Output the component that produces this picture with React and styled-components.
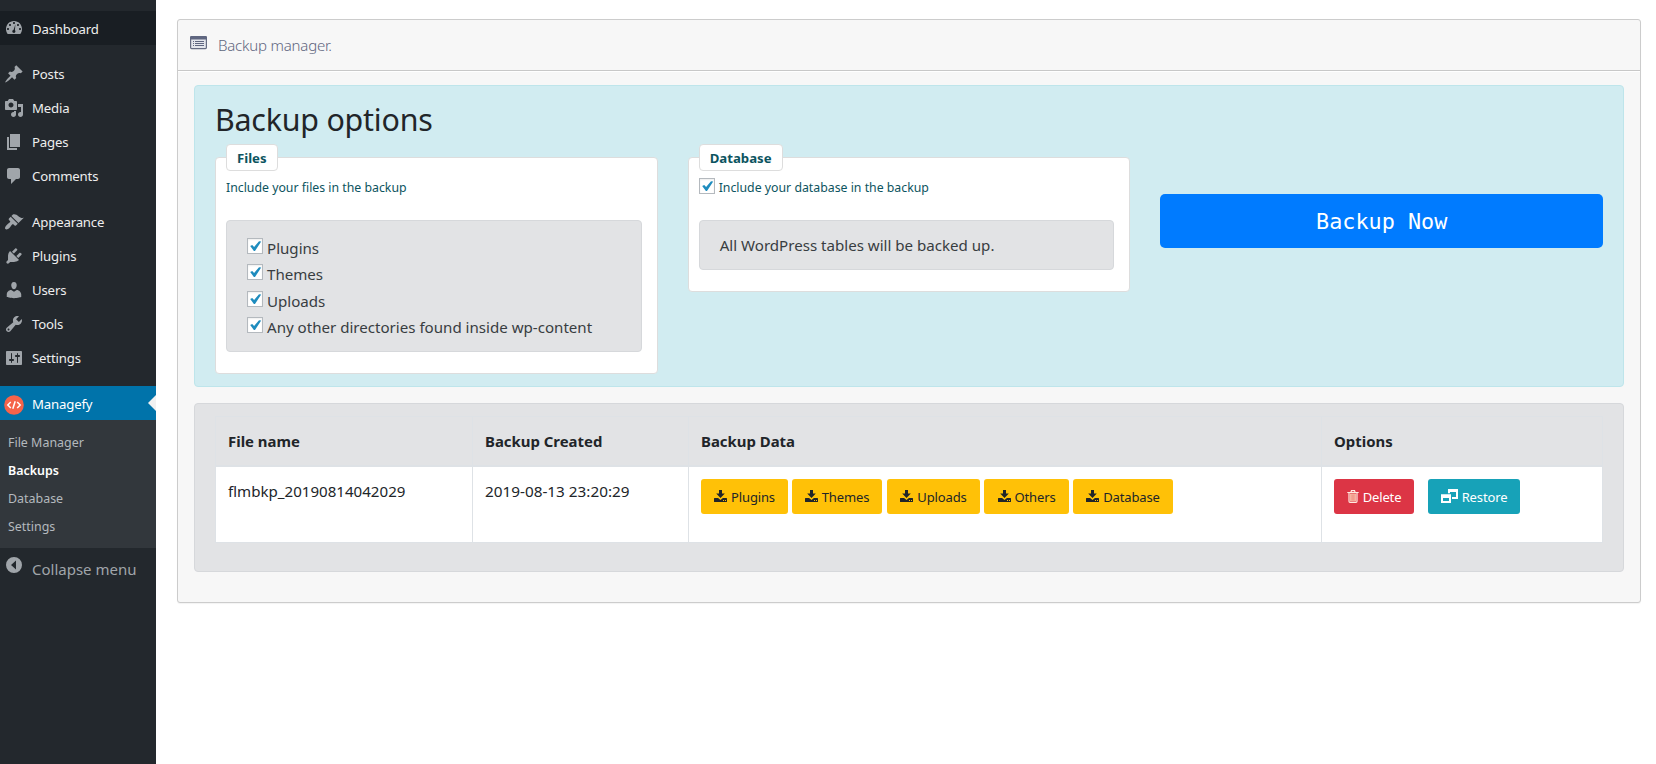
import React from 'react';
import styled, { createGlobalStyle, css } from 'styled-components';

const Global = createGlobalStyle`
  *, *::before, *::after { box-sizing: border-box; }
  html, body, #root { height: 100%; }
  body { margin: 0; background: #fff; color: #212529; font-family: "Noto Sans", "Open Sans", sans-serif; font-size: 15.1px; line-height: 24px; overflow: hidden; }
`;

const Page = styled.div`display: flex; height: 764px;`;

/* Sidebar */
const Sidebar = styled.nav`width: 156px; flex: none; background: #23282d; padding-top: 11px;`;
const MenuGroup = styled.div`margin-bottom: ${p => p.$gap ?? 12}px;`;
const MenuItem = styled.div`
  position: relative; height: 34px; display: flex; align-items: center; gap: 8px; padding-left: 4px;
  font-size: 13.2px; letter-spacing: -0.17px; color: ${p => (p.$current ? '#fff' : '#eee')}; line-height: 18px;
  background: ${p => (p.$current ? '#0073aa' : p.$hover ? '#191e23' : 'transparent')};
  svg { color: #a0a5aa; flex: none; }
`;
const MenuLabel = styled.span`padding-top: ${p => (p.$low ? 2 : 0)}px;`;
const Arrow = styled.span`
  position: absolute; right: 0; top: 9px; border: 8px solid transparent; border-right-color: #f1f1f1; border-left: 0;
`;
const SubMenu = styled.div`background: #32373c; height: 128px; padding: 9px 0 7px 8px;`;
const SubItem = styled.div`
  height: 28px; line-height: 28px; font-size: 12.45px; color: ${p => (p.$on ? '#fff' : '#b4b9be')};
  font-weight: ${p => (p.$on ? 600 : 400)};
`;
const Collapse = styled.div`
  display: flex; gap: 8px; padding: 7px 0 0 4px; color: #a0a5aa;
  span { padding-top: 2px; font-size: 15px; line-height: 24px; }
`;

/* Main panel */
const Main = styled.main`flex: 1; padding: 19px 15px 0 21px;`;
const Panel = styled.section`
  height: 584px; border: 1px solid #ccc; border-radius: 3px; background: #f7f7f7; box-shadow: 0 1px 1px rgba(0,0,0,.05);
`;
const PanelHead = styled.header`
  height: 51px; border-bottom: 1px solid #c8c8c8; box-shadow: 0 1px 0 #fff; display: flex; padding: 15px 0 0 12px; gap: 11px; color: #5f6680;
  svg { margin-top: 1px; }
  span { font-weight: 300; font-size: 15px; letter-spacing: -0.2px; line-height: 20px; }
`;
const PanelBody = styled.div`padding: 14px 16px; display: flex; flex-direction: column; gap: 16px;`;
const Box = styled.div`
  border: 1px solid ${p => (p.$info ? '#bee5eb' : '#d6d8db')}; background: ${p => (p.$info ? '#d1ecf1' : '#e2e3e5')};
  color: ${p => (p.$info ? '#0c5460' : '#383d41')}; border-radius: 4px; padding: 12px 20px;
`;
const OptionsBox = styled(Box)`height: 302px;`;
const TableBox = styled(Box)`height: 169px;`;
const ChecksBox = styled(Box)`height: 132px;`;
const Heading = styled.h2`
  margin: 0 0 21px; padding-top: 3px; height: 38px; font-size: 30.4px; letter-spacing: -0.22px; line-height: 38px;
  font-weight: 400; color: #212529;
`;
const Columns = styled.div`display: grid; grid-template-columns: repeat(3, 1fr); gap: 30px; align-items: start;`;
const FieldSet = styled.div`
  background: #fff; border: 1px solid #ddd; border-radius: 4px; padding: 0 15px 21px 10px; display: flex; flex-direction: column;
`;
const Legend = styled.div`
  align-self: flex-start; margin-top: -14px; height: 27px; padding: 1px 10px 0; border: 1px solid #ddd; border-radius: 4px;
  background: #fff; font-weight: 700; font-size: 13.2px; line-height: 25px;
`;
const Hint = styled.div`height: 16px; margin: 7px 0 26px; display: flex; gap: 4px; font-size: 12.3px; line-height: 20px;`;
const CheckRow = styled.div`
  height: 26.4px; display: flex; align-items: flex-start; gap: 4px; padding-top: 5px;
  span { line-height: 20px; }
`;
const CheckBoxFrame = styled.span`
  width: 16px; height: 16px; flex: none; border: 1px solid #b4b9be; background: #fff; box-shadow: inset 0 1px 2px rgba(0,0,0,.07);
  svg { display: block; }
`;
const BackupButton = styled.button`
  margin-top: 37px; height: 54px; width: 100%; border: 0; border-radius: 5px; background: #007bff; color: #fff;
  font: 21.8px/54px "DejaVu Sans Mono", monospace; padding: 1px 0 0;
`;
const Table = styled.table`
  width: 1388px; border-collapse: collapse; table-layout: fixed; color: #212529;
  th, td { border: 1px solid #dee2e6; padding: 12px; text-align: left; vertical-align: top; }
  th { border-bottom-width: 2px; height: 49px; padding-bottom: 11px; font-weight: 700; font-size: 14.92px; }
  td { background: #fff; height: 77px; }
`;
const DateCell = styled.td`font-size: 15.3px;`;
const tones = {
  warning: css`background: #ffc107; color: #212529;`,
  danger: css`background: #dc3545; color: #fff;`,
  info: css`background: #17a2b8; color: #fff;`,
};
const Actions = styled.div`display: flex; gap: ${p => p.$gap}px;`;
const Action = styled.button`
  height: 35px; width: ${p => p.$w}px; margin-right: ${p => p.$after ?? 0}px; border: 0; border-radius: 3px; padding: 0;
  display: flex; align-items: center; justify-content: center; gap: 4px;
  font: 13px/20px "Noto Sans", sans-serif; letter-spacing: -0.14px; ${p => tones[p.$tone]}
  span { padding-top: 2px; }
`;

const icons = {
  dashboard: 'M3.76 16h12.48c1.1-1.37 1.76-3.11 1.76-5 0-4.42-3.58-8-8-8s-8 3.58-8 8c0 1.89.66 3.63 1.76 5zM10 4c.55 0 1 .45 1 1s-.45 1-1 1-1-.45-1-1 .45-1 1-1zM6 6c.55 0 1 .45 1 1s-.45 1-1 1-1-.45-1-1 .45-1 1-1zm8 0c.55 0 1 .45 1 1s-.45 1-1 1-1-.45-1-1 .45-1 1-1zm-2.6.4l-.5 5.9c.5.4.7 1 .4 1.6-.3.8-1.2 1.2-2 .9-.8-.3-1.2-1.2-.9-2 .2-.5.6-.8 1.1-.9zM4 10c.55 0 1 .45 1 1s-.45 1-1 1-1-.45-1-1 .45-1 1-1zm12 0c.55 0 1 .45 1 1s-.45 1-1 1-1-.45-1-1 .45-1 1-1z',
  post: 'M10.44 3.02l1.82-1.82 6.36 6.35-1.83 1.82c-1.05-.68-2.48-.57-3.41.36l-.75.75c-.92.93-1.04 2.35-.35 3.41l-1.83 1.82-2.41-2.41-2.8 2.79c-.42.42-3.38 2.71-3.8 2.29s1.86-3.39 2.28-3.81l2.79-2.79L4.1 9.36l1.83-1.82c1.05.69 2.48.57 3.4-.36l.75-.75c.93-.92 1.05-2.35.36-3.41z',
  media: 'M13 11V4c0-.55-.45-1-1-1h-1.67L9 1H5L3.67 3H2c-.55 0-1 .45-1 1v7c0 .55.45 1 1 1h10c.55 0 1-.45 1-1zM7 4.5c1.38 0 2.5 1.12 2.5 2.5S8.38 9.5 7 9.5 4.5 8.38 4.5 7 5.62 4.5 7 4.5zM14 6h5v10.5c0 1.38-1.12 2.5-2.5 2.5S14 17.88 14 16.5s1.12-2.5 2.5-2.5c.17 0 .34.02.5.05V9h-3V6zm-4 8.05V13h2v3.5c0 1.38-1.12 2.5-2.5 2.5S7 17.88 7 16.5 8.12 14 9.5 14c.17 0 .34.02.5.05z',
  page: 'M6 15V2h10v13H6zm-1 1h8v2H3V5h2v11z',
  comment: 'M5 2h9c1.1 0 2 .9 2 2v7c0 1.1-.9 2-2 2h-2l-5 5v-5H5c-1.1 0-2-.9-2-2V4c0-1.1.9-2 2-2z',
  appearance: 'M14.48 11.06L7.41 3.99l1.5-1.5c.5-.56 2.3-.47 3.51.32 1.21.8 1.43 1.28 2.91 2.1 1.18.64 2.45 1.26 4.45.85zm-.71.71L6.7 4.7 4.93 6.47c-.39.39-.39 1.02 0 1.41l1.06 1.06c.39.39.39 1.03 0 1.42-.6.6-1.43 1.11-2.21 1.69-.35.26-.7.53-1.01.84C1.43 14.23.4 16.08 1.4 17.07c.99 1 2.84-.03 4.18-1.36.31-.31.58-.66.85-1.02.57-.78 1.08-1.61 1.69-2.21.39-.39 1.02-.39 1.41 0l1.06 1.06c.39.39 1.02.39 1.41 0z',
  plugins: 'M13.11 4.36L9.87 7.6 8 5.73l3.24-3.24c.35-.34 1.05-.2 1.56.32.52.51.66 1.21.31 1.55zm-8 1.77l.91-1.12 9.01 9.01-1.19.84c-.71.71-2.63 1.16-3.82 1.16H6.14L4.9 17.26c-.59.59-1.54.59-2.12 0-.59-.58-.59-1.53 0-2.12l1.24-1.24v-3.88c0-1.13.4-3.19 1.09-3.89zm7.26 3.97l3.24-3.24c.34-.35 1.04-.21 1.55.31.52.51.66 1.21.31 1.55l-3.24 3.25z',
  users: 'M10 9.25c-2.27 0-2.73-3.44-2.73-3.44C7 4.02 7.82 2 9.97 2c2.16 0 2.98 2.02 2.71 3.81 0 0-.41 3.44-2.68 3.44zm0 2.57L12.72 10c2.39 0 4.52 2.33 4.52 4.53v2.49s-3.65 1.13-7.24 1.13c-3.65 0-7.24-1.13-7.24-1.13v-2.49c0-2.25 1.94-4.48 4.47-4.48z',
  tools: 'M16.68 9.77c-1.34 1.34-3.3 1.67-4.95.99l-5.41 6.52c-.99.99-2.59.99-3.58 0s-.99-2.59 0-3.57l6.52-5.42c-.68-1.65-.35-3.61.99-4.95 1.28-1.28 3.12-1.62 4.72-1.06l-2.89 2.89 2.82 2.82 2.86-2.87c.53 1.58.18 3.39-1.08 4.65zM3.81 16.21c.4.39 1.04.39 1.43 0 .4-.4.4-1.04 0-1.43-.39-.4-1.03-.4-1.43 0-.39.39-.39 1.03 0 1.43z',
  settings: 'M18 16V4c0-.55-.45-1-1-1H3c-.55 0-1 .45-1 1v12c0 .55.45 1 1 1h14c.55 0 1-.45 1-1zM8 11h1c.55 0 1 .45 1 1s-.45 1-1 1H8v1.5c0 .28-.22.5-.5.5s-.5-.22-.5-.5V13H6c-.55 0-1-.45-1-1s.45-1 1-1h1V5.5c0-.28.22-.5.5-.5s.5.22.5.5V11zm5-2h-1c-.55 0-1-.45-1-1s.45-1 1-1h1V5.5c0-.28.22-.5.5-.5s.5.22.5.5V7h1c.55 0 1 .45 1 1s-.45 1-1 1h-1v5.5c0 .28-.22.5-.5.5s-.5-.22-.5-.5V9z',
};
const MenuIcon = ({ name }) => (
  <svg width="20" height="20" viewBox="0 0 20 20"><path fill="currentColor" fillRule="evenodd" d={icons[name]} /></svg>
);
const BadgeSvg = styled.svg`overflow: visible;`;
const CodeBadge = () => (
  <BadgeSvg width="20" height="20" viewBox="0 0 20 20">
    <g transform="translate(0 2)">
      <circle cx="10" cy="10" r="9.8" fill="#f5634a" />
      <path d="M6.8 7l-3 3 3 3M13.2 7l3 3-3 3M11.2 6.2l-2.4 7.6" fill="none" stroke="#fff" strokeWidth="1.5" />
    </g>
  </BadgeSvg>
);
const Check = () => (
  <CheckBoxFrame>
    <svg width="14" height="14" viewBox="0 0 14 14"><path d="M2.2 7l2-1 1.900 2.100 4.900-5.800 2.200.1-6.200 9.500H5.900z" fill="#1e8cbe" /></svg>
  </CheckBoxFrame>
);
const Download = () => (
  <svg width="13" height="12" viewBox="0 0 13 12">
    <path fill="currentColor" fillRule="evenodd" d="M5 0h3v3.5h2.800L6.500 8 2.200 3.500H5zM.6 8h3.500l2.400 2L8.900 8h3.500c.4 0 .6.2.6.6v2.800c0 .4-.2.6-.6.6H.6c-.4 0-.6-.2-.6-.6V8.600C0 8.200.2 8 .6 8zM9 10v1h1v-1zm2 0v1h1v-1z" />
  </svg>
);
const Trash = () => (
  <svg width="12" height="13" viewBox="0 0 12 13" fill="none">
    <path d="M3 3.500h6v7.800H3z" fill="#f7b4a0" />
    <path d="M.3 2.500h11.400M3.800 2.500l.7-1.800h3l.7 1.800M2 2.500v8.700c0 .7.400 1.200 1 1.200h6c.6 0 1-.5 1-1.200V2.500" stroke="#ffe9df" strokeWidth="1.2" />
    <path d="M5.100 4.500v6M6.900 4.500v6" stroke="#e8766c" strokeWidth=".6" />
  </svg>
);
const Windows = () => (
  <svg width="17" height="14" viewBox="0 0 17 14" fill="#fff">
    <path fillRule="evenodd" d="M7 0h10v10h-6V8h4V3H9v1.300H7zM0 5.200h10V14H0zM2 9v3h6V9z" />
  </svg>
);
const ListIcon = () => (
  <svg width="17" height="14" viewBox="0 0 17 14">
    <rect x=".6" y=".6" width="15.8" height="12" rx="1" fill="#e4e6ec" stroke="#666c82" strokeWidth="1.2" />
    <path d="M1 0h15l1 1v2.500H0V1z" fill="#5f6680" />
    <path d="M3 5.500h1M5 5.500h9M3 7.500h1M5 7.500h9M3 9.500h1M5 9.500h9" stroke="#5f6680" />
  </svg>
);

const groups = [
  [['dashboard', 'Dashboard']],
  [['post', 'Posts'], ['media', 'Media'], ['page', 'Pages'], ['comment', 'Comments']],
  [['appearance', 'Appearance'], ['plugins', 'Plugins'], ['users', 'Users'], ['tools', 'Tools'], ['settings', 'Settings']],
];
const downloads = [['Plugins', 87, 0], ['Themes', 90, 1], ['Uploads', 93, 0], ['Others', 85, 0], ['Database', 100, 0]];

export default function App() {
  return (
    <Page>
      <Global />
      <Sidebar>
        {groups.map((g, i) => (
          <MenuGroup key={i} $gap={i === 2 ? 11 : 12}>
            {g.map(([icon, label]) => (
              <MenuItem key={label} $hover={icon === 'dashboard'}>
                <MenuIcon name={icon} /><MenuLabel $low={icon === 'dashboard'}>{label}</MenuLabel>
              </MenuItem>
            ))}
          </MenuGroup>
        ))}
        <MenuItem $current><CodeBadge /><MenuLabel $low>Managefy</MenuLabel><Arrow /></MenuItem>
        <SubMenu>
          {['File Manager', 'Backups', 'Database', 'Settings'].map(t => <SubItem key={t} $on={t === 'Backups'}>{t}</SubItem>)}
        </SubMenu>
        <Collapse>
          <svg width="20" height="20" viewBox="0 0 20 20"><path fill="currentColor" fillRule="evenodd" d="M10 2a8 8 0 1 1 0 16 8 8 0 0 1 0-16zM12 5.500v9L7 10z" /></svg>
          <span>Collapse menu</span>
        </Collapse>
      </Sidebar>
      <Main>
        <Panel>
          <PanelHead><ListIcon /><span>Backup manager.</span></PanelHead>
          <PanelBody>
            <OptionsBox $info>
              <Heading>Backup options</Heading>
              <Columns>
                <FieldSet>
                  <Legend>Files</Legend>
                  <Hint>Include your files in the backup</Hint>
                  <ChecksBox>
                    {['Plugins', 'Themes', 'Uploads', 'Any other directories found inside wp-content'].map(t => (
                      <CheckRow key={t}><Check /><span>{t}</span></CheckRow>
                    ))}
                  </ChecksBox>
                </FieldSet>
                <FieldSet>
                  <Legend>Database</Legend>
                  <Hint><Check />Include your database in the backup</Hint>
                  <Box>All WordPress tables will be backed up.</Box>
                </FieldSet>
                <BackupButton>Backup Now</BackupButton>
              </Columns>
            </OptionsBox>
            <TableBox>
              <Table>
                <colgroup><col width="257" /><col width="216" /><col width="633" /><col /></colgroup>
                <thead><tr><th>File name</th><th>Backup Created</th><th>Backup Data</th><th>Options</th></tr></thead>
                <tbody><tr>
                  <td>flmbkp_20190814042029</td>
                  <DateCell>2019-08-13 23:20:29</DateCell>
                  <td><Actions $gap={4}>{downloads.map(([t, w, a]) => <Action key={t} $tone="warning" $w={w} $after={a}><Download /><span>{t}</span></Action>)}</Actions></td>
                  <td><Actions $gap={14}><Action $tone="danger" $w={80}><Trash /><span>Delete</span></Action><Action $tone="info" $w={92}><Windows /><span>Restore</span></Action></Actions></td>
                </tr></tbody>
              </Table>
            </TableBox>
          </PanelBody>
        </Panel>
      </Main>
    </Page>
  );
}
